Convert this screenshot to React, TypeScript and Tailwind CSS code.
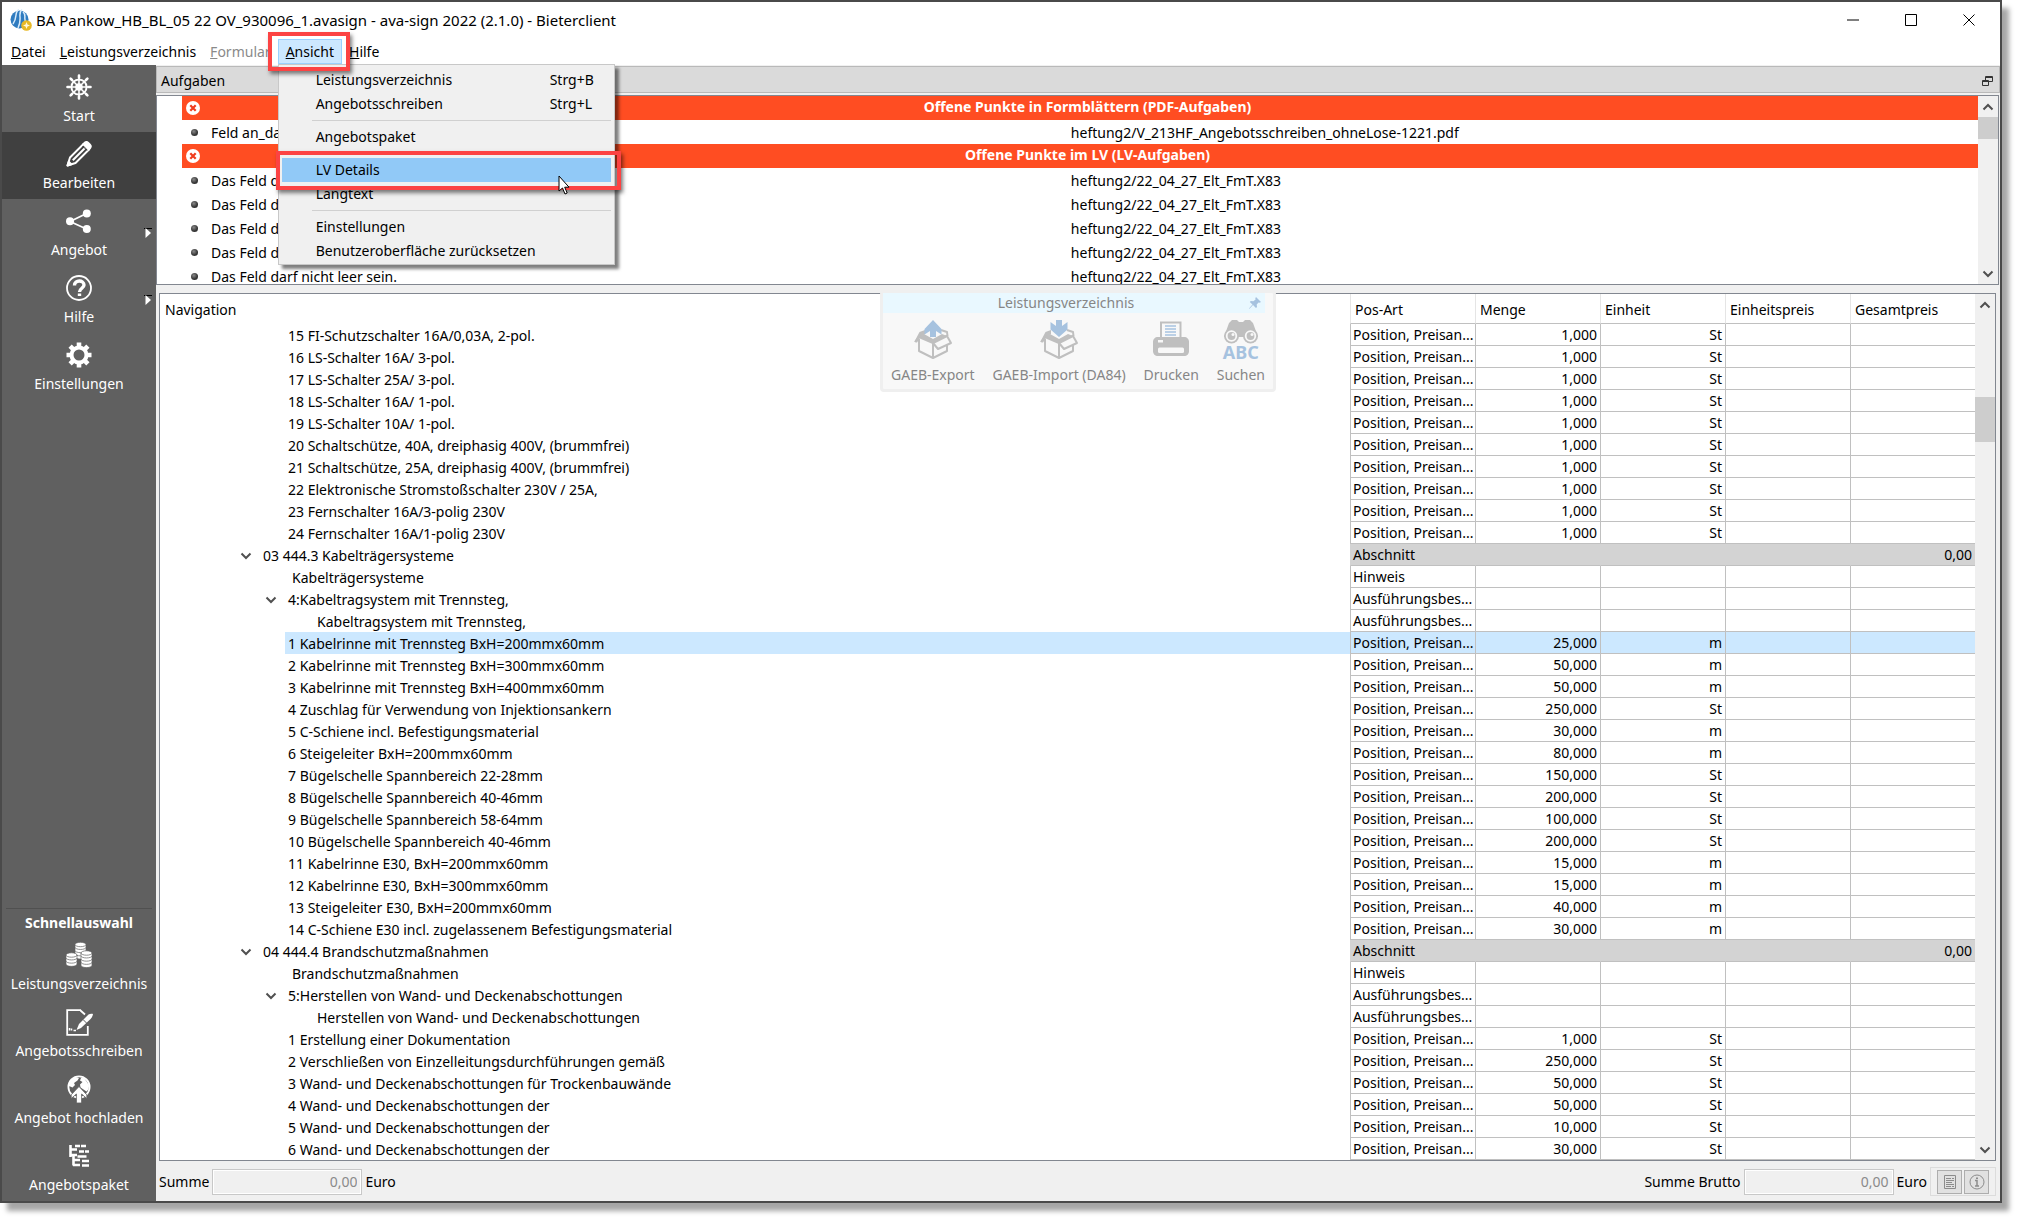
import type { ReactNode } from "react";

type Row = {
  text: string;
  kind: "item" | "section" | "sectionText" | "group" | "groupText";
  qty?: string;
  unit?: string;
  selected?: boolean;
};

const item = (text: string, qty: string, unit: string, selected = false): Row => ({
  text,
  kind: "item",
  qty,
  unit,
  selected,
});

const rows: Row[] = [
  item("15 FI-Schutzschalter 16A/0,03A, 2-pol.", "1,000", "St"),
  item("16 LS-Schalter 16A/ 3-pol.", "1,000", "St"),
  item("17 LS-Schalter 25A/ 3-pol.", "1,000", "St"),
  item("18 LS-Schalter 16A/ 1-pol.", "1,000", "St"),
  item("19 LS-Schalter 10A/ 1-pol.", "1,000", "St"),
  item("20 Schaltschütze, 40A, dreiphasig 400V, (brummfrei)", "1,000", "St"),
  item("21 Schaltschütze, 25A, dreiphasig 400V, (brummfrei)", "1,000", "St"),
  item("22 Elektronische Stromstoßschalter 230V / 25A,", "1,000", "St"),
  item("23 Fernschalter 16A/3-polig 230V", "1,000", "St"),
  item("24 Fernschalter 16A/1-polig 230V", "1,000", "St"),
  { text: "03 444.3 Kabelträgersysteme", kind: "section" },
  { text: "Kabelträgersysteme", kind: "sectionText" },
  { text: "4:Kabeltragsystem mit Trennsteg,", kind: "group" },
  { text: "Kabeltragsystem mit Trennsteg,", kind: "groupText" },
  item("1 Kabelrinne mit Trennsteg BxH=200mmx60mm", "25,000", "m", true),
  item("2 Kabelrinne mit Trennsteg BxH=300mmx60mm", "50,000", "m"),
  item("3 Kabelrinne mit Trennsteg BxH=400mmx60mm", "50,000", "m"),
  item("4 Zuschlag für Verwendung von Injektionsankern", "250,000", "St"),
  item("5 C-Schiene incl. Befestigungsmaterial", "30,000", "m"),
  item("6 Steigeleiter BxH=200mmx60mm", "80,000", "m"),
  item("7 Bügelschelle Spannbereich 22-28mm", "150,000", "St"),
  item("8 Bügelschelle Spannbereich 40-46mm", "200,000", "St"),
  item("9 Bügelschelle Spannbereich 58-64mm", "100,000", "St"),
  item("10 Bügelschelle Spannbereich 40-46mm", "200,000", "St"),
  item("11 Kabelrinne E30, BxH=200mmx60mm", "15,000", "m"),
  item("12 Kabelrinne E30, BxH=300mmx60mm", "15,000", "m"),
  item("13 Steigeleiter E30, BxH=200mmx60mm", "40,000", "m"),
  item("14 C-Schiene E30 incl. zugelassenem Befestigungsmaterial", "30,000", "m"),
  { text: "04 444.4 Brandschutzmaßnahmen", kind: "section" },
  { text: "Brandschutzmaßnahmen", kind: "sectionText" },
  { text: "5:Herstellen von Wand- und Deckenabschottungen", kind: "group" },
  { text: "Herstellen von Wand- und Deckenabschottungen", kind: "groupText" },
  item("1 Erstellung einer Dokumentation", "1,000", "St"),
  item("2 Verschließen von Einzelleitungsdurchführungen gemäß", "250,000", "St"),
  item("3 Wand- und Deckenabschottungen für Trockenbauwände", "50,000", "St"),
  item("4 Wand- und Deckenabschottungen der", "50,000", "St"),
  item("5 Wand- und Deckenabschottungen der", "10,000", "St"),
  item("6 Wand- und Deckenabschottungen der", "30,000", "St"),
];

const indent: Record<Row["kind"], string> = {
  item: "ml-[125px] pl-[3px]",
  section: "ml-[78px]",
  sectionText: "ml-[132px]",
  group: "ml-[103px]",
  groupText: "ml-[157px]",
};

const positionType: Record<Row["kind"], string> = {
  item: "Position, Preisan...",
  section: "Abschnitt",
  sectionText: "Hinweis",
  group: "Ausführungsbes...",
  groupText: "Ausführungsbes...",
};

function Chevron({ up = false }: { up?: boolean }) {
  return (
    <svg viewBox="0 0 12 8" className="h-2 w-3" fill="none" stroke="#505050" strokeWidth="2">
      <path d={up ? "M1.5 6.5 6 2l4.5 4.5" : "M1.5 1.5 6 6l4.5-4.5"} />
    </svg>
  );
}

function ScrollBar({ label, children }: { label: string; children: ReactNode }) {
  return (
    <div className="flex w-5 shrink-0 flex-col bg-[#f0f0f0]">
      <button aria-label={`${label} nach oben`} className="grid h-[21px] shrink-0 place-items-center">
        <Chevron up />
      </button>
      <div className="flex min-h-0 grow flex-col">{children}</div>
      <button aria-label={`${label} nach unten`} className="grid h-[21px] shrink-0 place-items-center">
        <Chevron />
      </button>
    </div>
  );
}

const WheelIcon = () => (
  <svg viewBox="0 0 26 26" className="size-[26px]" fill="none" stroke="white">
    <circle cx="13" cy="13" r="7.6" strokeWidth="2" />
    <circle cx="13" cy="13" r="3" strokeWidth="1.6" />
    <path strokeWidth="1.6" d="M13 1v24M1 13h24M4.5 4.5l17 17M21.5 4.5l-17 17" />
    <path strokeWidth="2.6" strokeLinecap="round" d="M13 1.5v2M13 22.5v2M1.5 13h2M22.5 13h2M4.6 4.6l1.4 1.4M20 20l1.4 1.4M21.4 4.6 20 6M6 20l-1.4 1.4" />
    <circle cx="13" cy="13" r="1.5" fill="white" stroke="none" />
  </svg>
);

const PencilIcon = () => (
  <svg viewBox="0 0 26 26" className="size-[26px]" fill="none" stroke="white" strokeWidth="2" strokeLinejoin="round">
    <path d="M1.5 24.5 4 16.500 17.500 3l5.500 5.500L9.500 22Z" />
    <path d="M17.500 3 19 1.600c1-.8 2-.8 3 .2l2 2c1 1 1 2 .2 3L23 8.500Z" fill="white" />
    <path d="M6.800 19.200 19 7" />
    <path d="m1.500 24.500 1.200-3.800 2.600 2.600Z" fill="white" />
    <path d="m16.500 5 4.500 4.500" stroke="#404040" strokeWidth="1" />
  </svg>
);

const ShareIcon = () => (
  <svg viewBox="0 0 26 26" className="size-[26px]" fill="white" stroke="white">
    <path d="M4 13.500 20.500 5.500M4 13.500l16.500 7.500" strokeWidth="1.800" />
    <g stroke="none">
      <circle cx="4" cy="13.300" r="4" />
      <circle cx="20.800" cy="5.600" r="4" />
      <circle cx="20.800" cy="21" r="4" />
    </g>
  </svg>
);

const HelpIcon = () => (
  <svg viewBox="0 0 26 26" className="size-[26px]" fill="none" stroke="white">
    <circle cx="13" cy="13" r="12" strokeWidth="1.800" />
    <path d="M8.500 10.500C8.500 4.500 18 4.700 18 10c0 3.200-4.500 3.300-4.500 7" strokeWidth="3.400" />
    <path d="M11.800 18.500h3.400V21h-3.400z" fill="white" stroke="none" />
  </svg>
);

const GearIcon = () => (
  <svg viewBox="0 0 26 26" className="size-[26px]" fill="none" stroke="white">
    <circle cx="13" cy="13" r="7.500" strokeWidth="4" />
    <path
      strokeWidth="4.600"
      d="M13 .5v4M13 21.500v4M.5 13h4M21.500 13h4M4.100 4.100l3 3M18.900 18.900l3 3M21.900 4.100l-3 3M7.100 18.900l-3 3"
    />
  </svg>
);

function CoinStack({ x, y, n }: { x: number; y: number; n: number }) {
  return (
    <g>
      {Array.from({ length: n }, (_, i) => n - 1 - i).map((i) => (
        <path
          key={i}
          d={`M${x} ${y + i * 3.2}v2.700c0 3 11 3 11 0v-2.700Z`}
          fill="white"
          stroke="#606060"
          strokeWidth=".7"
        />
      ))}
      <ellipse cx={x + 5.5} cy={y} rx="5.500" ry="2.200" fill="white" stroke="#606060" strokeWidth=".7" />
    </g>
  );
}

const CoinsIcon = () => (
  <svg viewBox="0 0 26 26" className="size-[26px]">
    <CoinStack x={9} y={2.5} n={4} />
    <CoinStack x={0} y={13} n={3} />
    <CoinStack x={15} y={11} n={4} />
  </svg>
);

const SignIcon = () => (
  <svg viewBox="0 0 27 27" className="size-[27px]" fill="none" stroke="white">
    <path d="M15 1.200H1.200v24.600h20.600V17M14.500 1.500l4.500 4" strokeWidth="1.800" />
    <path d="M3.500 21.500v-2.500M5.500 21.500v-2M7.500 21.500h2.500" strokeWidth="1.500" />
    <path d="m10.500 21 2.500-6L22.500 5.500c1.500-1 3.500-1 4.500-.5-.5 3-2 4.500-3.500 6L15 19Z" fill="white" stroke="none" />
    <path d="m17 10.500 4 4" stroke="#606060" strokeWidth="1" />
  </svg>
);

const UploadIcon = () => (
  <svg viewBox="0 0 24 28" className="h-7 w-6">
    <circle cx="12" cy="12" r="10.600" fill="none" stroke="white" strokeWidth="1.800" />
    <path d="M8 2C4.500 3.500 2 7 2 11l3.500 1.500L8 10 7 8l3.500-2.500L12 3ZM14 3l-1 2.500 2.500 1.500-2.500 2.500.5 3 6 4c2-1.500 2.500-3.500 2.500-6L20 7l-3-4Z" fill="white" />
    <path d="m12 11.500 7.800 8.300v3.700L14.600 19v9H9.400v-9l-5.200 4.500v-3.700Z" fill="white" stroke="#606060" strokeWidth=".8" />
  </svg>
);

const TreeIcon = () => (
  <svg viewBox="0 0 22 24" className="h-6 w-[22px]" fill="none" stroke="white">
    <path d="M2.500 1v12M5.500 12v9.500" strokeWidth="2.600" />
    <path d="M2 5.500h7M2 11h7M5 16h7M5 21h7" strokeWidth="2.600" />
    <path d="M7 2h5M13 2h5M11 7.500h5M17 7.500h4M9.500 12.500h4M13.500 12.500h5M14 17h7M14 21.500h7" strokeWidth="2.400" />
  </svg>
);

function SideButton({
  label,
  icon,
  active = false,
  flyout = false,
}: {
  label: string;
  icon: ReactNode;
  active?: boolean;
  flyout?: boolean;
}) {
  return (
    <button className={`relative flex h-[67px] w-full flex-col items-center pt-2 ${active ? "bg-[#404040]" : ""}`}>
      <span className="grid h-7 place-items-center">{icon}</span>
      <span className="mt-[5px] leading-5">{label}</span>
      {flyout && (
        <svg viewBox="0 0 8 12" className="absolute top-7 right-1 h-3 w-2">
          <path d="M0 1.500h8" stroke="black" />
          <path d="M1.500 1v10L7 6Z" fill="white" />
        </svg>
      )}
    </button>
  );
}

function Box({ children }: { children: ReactNode }) {
  return (
    <svg viewBox="0 0 40 40" className="size-10" fill="none" stroke="#bfbfbf" strokeWidth="2" strokeLinejoin="round">
      <path d="M6 20v12l14 7 14-7V26M20 24v14M6 18l14 6 14-7" />
      <path d="M6 18 2 23M6 18l-3.500 5M34 17l4 7-13 6-5-6Z" fill="#f8f8f8" />
      <path d="M1.500 22.500 6.500 13l5.500-2v4l-4.500 3-3.500 5.500Z" fill="#bfbfbf" stroke="none" />
      <path d="m11 15 9 5 9-5 5 2-14 7-14-6Z" fill="#bfbfbf" stroke="none" />
      <path d="m28 11 6 2 .5 4" />
      {children}
    </svg>
  );
}

const ExportIcon = () => (
  <Box>
    <path d="m20 1 8.500 9v5.500L23 12v6h-6v-6l-5.500 3.500V10Z" fill="#a6c2df" stroke="none" />
  </Box>
);

const ImportIcon = () => (
  <Box>
    <path d="M17 1h6v6l5.500-4v7.500L20 18l-8.500-7.500V3L17 7Z" fill="#a6c2df" stroke="none" />
  </Box>
);

const PrinterIcon = () => (
  <svg viewBox="0 0 40 40" className="size-10">
    <path d="M10 19V3.500h19.500V19" fill="none" stroke="#bfbfbf" strokeWidth="2" />
    <path d="M14 7h11M14 10h11M14 13h11M14 16h11" stroke="#a6c2df" strokeWidth="1.500" />
    <path d="M7 18h26c3 0 5 2 5 5v9c0 3-2 5-5 5H7c-3 0-5-2-5-5v-9c0-3 2-5 5-5Z" fill="#bfbfbf" />
    <rect x="7" y="28.500" width="26" height="5.500" rx="1.500" fill="#f8f8f8" />
    <rect x="7" y="21" width="5" height="2.500" fill="#f8f8f8" />
  </svg>
);

const SearchIcon = () => (
  <span className="flex flex-col items-center pt-0.5">
    <svg viewBox="0 0 36 25" className="h-[25px] w-9">
      <path d="M9 1h5l2 2h4l2-2h5l3 3 5 14H1L6 4Z" fill="#bfbfbf" />
      <circle cx="8.500" cy="17" r="7.500" fill="#bfbfbf" />
      <circle cx="27.500" cy="17" r="7.500" fill="#bfbfbf" />
      <circle cx="8.500" cy="17" r="4.800" fill="#bfbfbf" stroke="#f8f8f8" strokeWidth="1.800" />
      <circle cx="27.500" cy="17" r="4.800" fill="#bfbfbf" stroke="#f8f8f8" strokeWidth="1.800" />
      <circle cx="10" cy="15.500" r="1.500" fill="#f8f8f8" />
      <circle cx="29" cy="15.500" r="1.500" fill="#f8f8f8" />
    </svg>
    <b className="text-lg leading-4 text-[#a6c2df]">ABC</b>
  </span>
);

const AppIcon = () => (
  <svg viewBox="0 0 22 22" className="size-[22px]">
    <circle cx="9.500" cy="10.500" r="9" fill="#2f7cc0" />
    <path d="M9 .5C4 3 8 8 3 15M12 .5C7 5 13 9 8 19M13 3c4 3 0 7 3 10" stroke="#d8ebfa" strokeWidth="1.500" fill="none" />
    <circle cx="16.500" cy="16.500" r="5.300" fill="#e8b927" />
    <path d="m16.500 13 1 2.500 2.500 1-2.500 1-1 2.500-1-2.500-2.500-1 2.500-1Z" fill="#fff8dc" />
  </svg>
);

function MenuEntry({ label, shortcut, active = false }: { label: string; shortcut?: string; active?: boolean }) {
  return (
    <button
      role="menuitem"
      className={`relative flex h-6 w-full items-center pr-3 pl-[34px] text-left ${active ? "bg-[#91c9f7]" : ""}`}
    >
      <span className="grow">{label}</span>
      {shortcut && <span className="w-[49px]">{shortcut}</span>}
      {active && (
        <>
          <span className="absolute -top-[7px] -right-2.5 -bottom-2 -left-1.5 z-10 border-4 border-[#fc4343] shadow-[2px_3px_4px_rgba(0,0,0,0.5)]" />
          <svg viewBox="0 0 13 20" className="absolute top-[17px] right-10 z-20 h-5 w-[13px]">
            <path d="M1 1v15l3.500-3 2.500 6 2.200-1-2.500-5.800H11Z" fill="white" stroke="black" />
          </svg>
        </>
      )}
    </button>
  );
}

const MenuDivider = () => <hr className="mt-1 mb-1 ml-[30px] border-[#d0d0d0]" />;

function MenuBar() {
  return (
    <nav className="flex h-[27px] items-stretch bg-white pt-px pl-0.5">
      <button className="px-[7px]">
        <u>D</u>atei
      </button>
      <button className="px-[7px]">
        <u>L</u>eistungsverzeichnis
      </button>
      <button className="px-[7px] text-[#8a8a8a]" disabled>
        <u>F</u>ormular
      </button>
      <div className="relative">
        <button className="h-[25px] border border-[#99d1ff] bg-[#cce8ff] px-[7px]" aria-expanded="true">
          <u>A</u>nsicht
        </button>
        <div
          role="menu"
          className="absolute top-[25px] left-0 z-20 w-[337px] border border-[#c8c8c8] bg-[#f0f0f0] p-[3px] pb-px shadow-[4px_4px_3px_rgba(0,0,0,0.5)]"
        >
          <MenuEntry label="Leistungsverzeichnis" shortcut="Strg+B" />
          <MenuEntry label="Angebotsschreiben" shortcut="Strg+L" />
          <MenuDivider />
          <MenuEntry label="Angebotspaket" />
          <MenuDivider />
          <MenuEntry label="LV Details" active />
          <MenuEntry label="Langtext" />
          <MenuDivider />
          <MenuEntry label="Einstellungen" />
          <MenuEntry label="Benutzeroberfläche zurücksetzen" />
        </div>
        <span className="absolute -top-[7px] -right-2 -bottom-1.5 -left-2.5 z-30 border-4 border-[#fc4343] shadow-[2px_3px_4px_rgba(0,0,0,0.5)]" />
      </div>
      <button className="px-[7px]">
        <u>H</u>ilfe
      </button>
    </nav>
  );
}

function TaskHeader({ text }: { text: string }) {
  return (
    <tr className="h-6">
      <td />
      <td className="bg-[#ff4d22] pl-1">
        <svg viewBox="0 0 14 14" className="size-3.5">
          <circle cx="7" cy="7" r="7" fill="white" />
          <path d="m4.300 4.300 5.400 5.400M9.700 4.300 4.300 9.700" stroke="#f03c1e" strokeWidth="2.200" />
        </svg>
      </td>
      <th colSpan={2} className="bg-[#ff4d22] pr-2 pb-0.5 font-bold text-white">
        {text}
      </th>
    </tr>
  );
}

function Task({ text, file }: { text: string; file: string }) {
  return (
    <tr className="h-6">
      <td />
      <td className="pl-[9px]">
        <span className="block size-[7px] rounded-full bg-[radial-gradient(circle_at_40%_35%,#8a8a8a,#333_60%)]" />
      </td>
      <td className="pt-px pl-1.5">{text}</td>
      <td className="pt-px pl-2.5">{file}</td>
    </tr>
  );
}

function Tasks() {
  const file = "heftung2/22_04_27_Elt_FmT.X83";
  return (
    <section>
      <header className="mt-px flex h-[27px] items-center justify-between border border-[#b9b9b9] bg-[#dadada] pt-0.5 pr-1.5 pl-1 leading-5">
        <h2>Aufgaben</h2>
        <button aria-label="Aufgaben abdocken">
          <svg viewBox="0 0 11 12" className="h-3 w-[11px]" fill="#dadada" stroke="#333">
            <path d="M3.500 1.500h7v5h-7zM3 2.500h8" />
            <path d="M.5 5.500h6v5h-6zM0 6.500h7" />
          </svg>
        </button>
      </header>
      <div className="mt-0.5 mr-px flex h-[190px] overflow-hidden border border-[#828790] bg-white">
        <div className="grow overflow-hidden">
          <table className="w-full table-fixed border-separate border-spacing-0">
            <colgroup>
              <col className="w-[25px]" />
              <col className="w-[23px]" />
              <col className="w-[47%]" />
              <col />
            </colgroup>
            <tbody>
              <TaskHeader text="Offene Punkte in Formblättern (PDF-Aufgaben)" />
              <Task text="Feld an_datum darf nicht leer sein." file="heftung2/V_213HF_Angebotsschreiben_ohneLose-1221.pdf" />
              <TaskHeader text="Offene Punkte im LV (LV-Aufgaben)" />
              {[0, 1, 2, 3, 4].map((i) => (
                <Task key={i} text="Das Feld darf nicht leer sein." file={file} />
              ))}
            </tbody>
          </table>
        </div>
        <ScrollBar label="Aufgaben">
          <div className="h-[22px] bg-[#cdcdcd]" />
        </ScrollBar>
      </div>
    </section>
  );
}

function ToolButton({ label, icon }: { label: string; icon: ReactNode }) {
  return (
    <button className="flex flex-col items-center">
      <span className="grid h-[45px] place-items-center">{icon}</span>
      <span className="mt-1 leading-5">{label}</span>
    </button>
  );
}

function FloatingTools() {
  return (
    <div className="absolute top-[5px] left-1/2 z-10 w-[396px] -translate-x-1/2 rounded border-[3px] border-[#efefef] bg-[#f8f8f8] text-[#868686]">
      <div className="relative mr-2 h-5 bg-[#e9f8ff] pr-4 text-center leading-5">
        Leistungsverzeichnis
        <button aria-label="Anheften" className="absolute top-1 right-1">
          <svg viewBox="0 0 12 12" className="size-3" fill="#a6c2df">
            <path d="m7 0 5 5-1.500.7-1-.3-1.800 2 .3 2.600-1 1L4 8 .5 11.800 0 11.500 3.500 7.600.8 5l1-1 2.600.3L6.600 2.500 6.300 1.200Z" />
          </svg>
        </button>
      </div>
      <div className="flex justify-between px-2 pt-[3px] pb-1">
        <ToolButton label="GAEB-Export" icon={<ExportIcon />} />
        <ToolButton label="GAEB-Import (DA84)" icon={<ImportIcon />} />
        <ToolButton label="Drucken" icon={<PrinterIcon />} />
        <ToolButton label="Suchen" icon={<SearchIcon />} />
      </div>
    </div>
  );
}

function PositionRow({ row }: { row: Row }) {
  const section = row.kind === "section";
  const expandable = section || row.kind === "group";
  const tone = row.selected ? "bg-[#cce8ff]" : section ? "bg-[#d3d3d3]" : "";
  const cell = `border-b border-l border-b-[#c0c0c0] ${section ? "border-l-[#d3d3d3]" : "border-l-[#c0c0c0]"} ${tone}`;
  return (
    <tr className="h-[22px]">
      <td>
        <div className={`flex h-[22px] items-center gap-[11px] pt-px ${indent[row.kind]} ${row.selected ? tone : ""}`}>
          {expandable && (
            <button aria-label="Einklappen" className="ml-0.5 grid">
              <Chevron />
            </button>
          )}
          {row.text}
        </div>
      </td>
      <td className={`${cell} overflow-hidden pt-px pl-0.5`}>{positionType[row.kind]}</td>
      <td className={`${cell} pr-[3px] text-right`}>{row.qty}</td>
      <td className={`${cell} pr-[3px] text-right`}>{row.unit}</td>
      <td className={cell} />
      <td className={`${cell} pr-[3px] text-right`}>{section ? "0,00" : ""}</td>
    </tr>
  );
}

function Positions() {
  return (
    <section className="relative pt-2 pr-1 pl-[3px]">
      <FloatingTools />
      <div className="flex overflow-hidden border border-[#828790] bg-white">
        <table className="grow table-fixed border-separate border-spacing-0 leading-5 whitespace-nowrap">
          <colgroup>
            <col />
            <col className="w-[125px]" />
            <col className="w-[125px]" />
            <col className="w-[125px]" />
            <col className="w-[125px]" />
            <col className="w-[125px]" />
          </colgroup>
          <thead>
            <tr className="h-[30px] text-left">
              <th className="pt-0.5 pl-[5px] font-normal">Navigation</th>
              {["Pos-Art", "Menge", "Einheit", "Einheitspreis", "Gesamtpreis"].map((h) => (
                <th key={h} className="border-b border-l border-b-[#c0c0c0] border-l-[#e5e5e5] pt-0.5 pl-1 font-normal">
                  {h}
                </th>
              ))}
            </tr>
          </thead>
          <tbody>
            {rows.map((row, i) => (
              <PositionRow key={i} row={row} />
            ))}
          </tbody>
        </table>
        <ScrollBar label="Positionen">
          <div className="h-[10%]" />
          <div className="h-[45px] bg-[#cdcdcd]" />
        </ScrollBar>
      </div>
    </section>
  );
}

function Total({ id, label }: { id: string; label: string }) {
  return (
    <div className="flex items-center gap-[3px]">
      <label htmlFor={id}>{label}</label>
      <input
        id={id}
        disabled
        defaultValue="0,00"
        className="h-[26px] w-[150px] border border-[#c8c8c8] bg-[#f0f0f0] pr-1 text-right text-[#8a8a8a] outline-1 -outline-offset-2 outline-white"
      />
      <span>Euro</span>
    </div>
  );
}

function Footer() {
  return (
    <footer className="flex h-10 items-center justify-between pt-px pr-1 pl-[3px]">
      <Total id="summe" label="Summe" />
      <div className="flex items-center gap-[3px]">
        <Total id="summe-brutto" label="Summe Brutto" />
        <div className="flex h-[29px] items-center gap-0.5 border border-[#dcdcdc] px-1.5">
          <button aria-label="Bericht" className="grid h-6 w-[25px] place-items-center border border-[#adadad] bg-[#e1e1e1]">
            <svg viewBox="0 0 14 16" className="h-4 w-3.5" fill="none" stroke="#8c8c8c">
              <path d="M1.500 1.500h11v13h-11z" />
              <path d="M3 4.500h5M9 4.500h2M3 6.500h8M3 8.500h6M3 10.500h8M3 12.500h5M9 12.500h2" />
            </svg>
          </button>
          <button aria-label="Information" className="grid h-6 w-[25px] place-items-center border border-[#adadad] bg-[#e1e1e1]">
            <svg viewBox="0 0 16 16" className="size-4" fill="none" stroke="#8c8c8c">
              <circle cx="8" cy="8" r="7" />
              <path d="M6 6.500h2V12M6 12h4" strokeWidth="1.500" />
              <path d="M7 3.500h2v1.500H7z" fill="#8c8c8c" stroke="none" />
            </svg>
          </button>
        </div>
      </div>
    </footer>
  );
}

export default function App() {
  return (
    <div className="flex min-h-screen bg-white pr-[15px] pb-[15px] font-['Noto_Sans','Open_Sans',sans-serif] text-sm leading-5 text-black">
      <div className="flex min-w-0 grow flex-col border-2 border-[#4a4a4a] bg-[#f0f0f0] shadow-[7px_8px_5px_rgba(0,0,0,0.35)]">
        <header className="flex h-[36px] items-center bg-white pr-0.5 pl-2">
          <AppIcon />
          <h1 className="ml-1 grow text-[15px]">BA Pankow_HB_BL_05 22 OV_930096_1.avasign - ava-sign 2022 (2.1.0) - Bieterclient</h1>
          {[
            ["Minimieren", "M0 6h12"],
            ["Maximieren", "M.5.5h11v11H.5z"],
            ["Schließen", "m.5.5 11 11m0-11-11 11"],
          ].map(([label, d]) => (
            <button key={label} aria-label={label} className="grid h-full w-[58px] place-items-center">
              <svg viewBox="0 0 12 12" className="size-3" fill="none" stroke="black">
                <path d={d} />
              </svg>
            </button>
          ))}
        </header>
        <MenuBar />
        <div className="flex grow">
          <aside className="flex w-[154px] shrink-0 flex-col bg-[#606060] text-white">
            <SideButton label="Start" icon={<WheelIcon />} />
            <SideButton label="Bearbeiten" icon={<PencilIcon />} active />
            <SideButton label="Angebot" icon={<ShareIcon />} flyout />
            <SideButton label="Hilfe" icon={<HelpIcon />} flyout />
            <SideButton label="Einstellungen" icon={<GearIcon />} />
            <h2 className="mx-1 mt-auto border-t border-[#505050] pt-1 text-center leading-5 font-bold">Schnellauswahl</h2>
            <SideButton label="Leistungsverzeichnis" icon={<CoinsIcon />} />
            <SideButton label="Angebotsschreiben" icon={<SignIcon />} />
            <SideButton label="Angebot hochladen" icon={<UploadIcon />} />
            <SideButton label="Angebotspaket" icon={<TreeIcon />} />
          </aside>
          <main className="min-w-0 grow">
            <Tasks />
            <Positions />
            <Footer />
          </main>
        </div>
      </div>
    </div>
  );
}
